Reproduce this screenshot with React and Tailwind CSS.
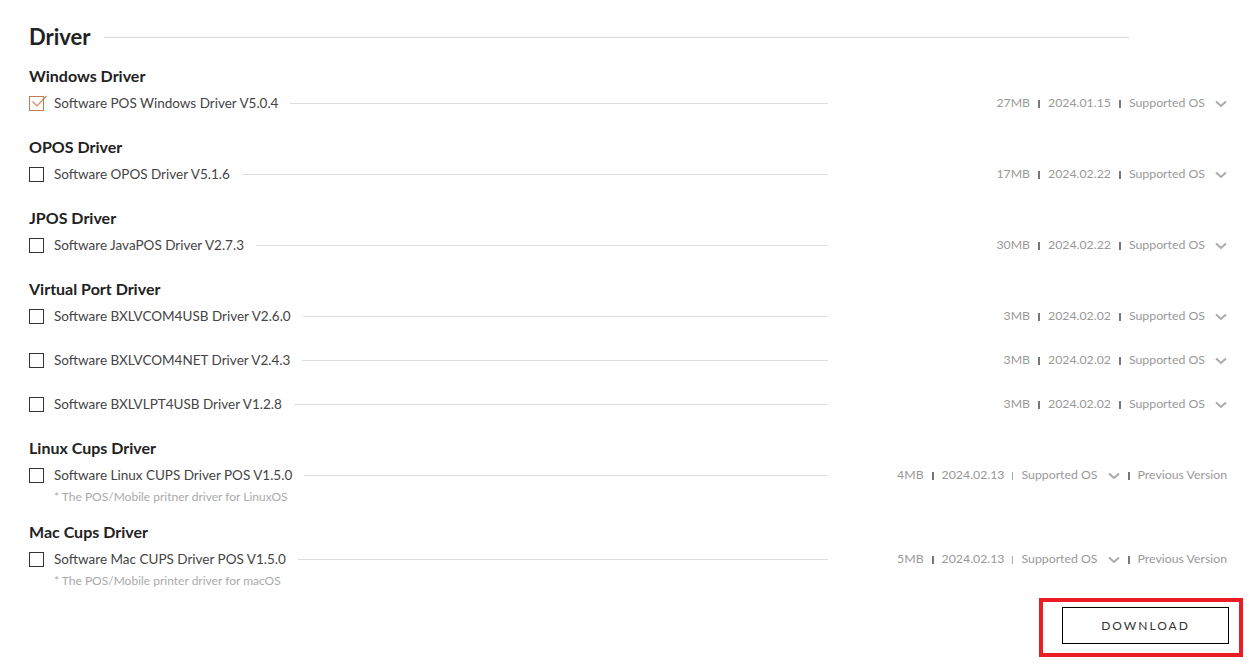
import React from 'react';

const groups = [
  {
    title: 'Windows Driver',
    items: [{ name: 'Software POS Windows Driver V5.0.4', size: '27MB', date: '2024.01.15', checked: true }],
  },
  {
    title: 'OPOS Driver',
    items: [{ name: 'Software OPOS Driver V5.1.6', size: '17MB', date: '2024.02.22' }],
  },
  {
    title: 'JPOS Driver',
    items: [{ name: 'Software JavaPOS Driver V2.7.3', size: '30MB', date: '2024.02.22' }],
  },
  {
    title: 'Virtual Port Driver',
    items: [
      { name: 'Software BXLVCOM4USB Driver V2.6.0', size: '3MB', date: '2024.02.02' },
      { name: 'Software BXLVCOM4NET Driver V2.4.3', size: '3MB', date: '2024.02.02' },
      { name: 'Software BXLVLPT4USB Driver V1.2.8', size: '3MB', date: '2024.02.02' },
    ],
  },
  {
    title: 'Linux Cups Driver',
    items: [
      {
        name: 'Software Linux CUPS Driver POS V1.5.0',
        size: '4MB',
        date: '2024.02.13',
        prev: true,
        note: '* The POS/Mobile pritner driver for LinuxOS',
      },
    ],
  },
  {
    title: 'Mac Cups Driver',
    items: [
      {
        name: 'Software Mac CUPS Driver POS V1.5.0',
        size: '5MB',
        date: '2024.02.13',
        prev: true,
        note: '* The POS/Mobile printer driver for macOS',
      },
    ],
  },
];

const Sep = ({ thin }) => (
  <span className={thin ? 'mx-[8px] inline-block w-px h-[8px] bg-[#aaa]' : 'mx-[8px] inline-block w-[2px] h-[8px] bg-[#777]'} />
);

const Chevron = () => (
  <svg width="12" height="8" viewBox="0 0 12 8" className="ml-[10px]" fill="none">
    <path d="M1 1.5l5 4.5 5-4.5" stroke="#aaa" strokeWidth="2" />
  </svg>
);

const Checkbox = ({ checked }) =>
  checked ? (
    <span className="relative inline-block w-[15px] h-[15px] border border-[#c8794c] shrink-0">
      <svg width="16" height="14" viewBox="0 0 16 14" className="absolute left-[2px] top-[-2px]" fill="none">
        <path d="M0.5 6.5l4.5 4.5 9.5-10" stroke="#d08a5e" strokeWidth="1.2" />
      </svg>
    </span>
  ) : (
    <span className="inline-block w-[15px] h-[15px] border border-[#333] shrink-0" />
  );

const Row = ({ item }) => (
  <div>
    <div className="flex items-center h-[24px]">
      <div className="flex items-center w-[799px]">
        <Checkbox checked={item.checked} />
        <span className="ml-[10px] text-[13.5px] text-[#444] whitespace-nowrap">{item.name}</span>
        <span className="ml-[12px] flex-1 h-px bg-[#ddd]" />
      </div>
      <div className="ml-auto mt-[1px] flex items-center text-[12.3px] text-[#999] whitespace-nowrap">
        <span>{item.size}</span>
        <Sep />
        <span>{item.date}</span>
        <Sep thin={item.prev} />
        <span>Supported OS</span>
        <Chevron />
        {item.prev && (
          <>
            <Sep />
            <span>Previous Version</span>
          </>
        )}
      </div>
    </div>
    {item.note && <div className="mt-[2px] pl-[25px] h-[16px] leading-[16px] text-[12px] text-[#aaa]">{item.note}</div>}
  </div>
);

export default function App() {
  return (
    <div className="w-[1251px] h-[670px] bg-white pl-[29px] pr-[24px] pt-[20px] font-['Lato',sans-serif] overflow-hidden">
      <div className="flex items-center h-[34px] mr-[98px]">
        <h2 className="text-[22px] font-bold text-[#222] leading-none">Driver</h2>
        <span className="ml-[13px] flex-1 h-px bg-[#d8d8d8]" />
      </div>

      <div className="mt-[12px]">
        {groups.map((g, i) => (
          <div key={g.title} className={i === 0 ? '' : i === 5 ? 'mt-[17px]' : 'mt-[22px]'}>
            <h3 className="h-[20px] leading-[20px] text-[16px] font-bold text-[#222]">{g.title}</h3>
            <div className="mt-[5px] flex flex-col gap-[20px]">
              {g.items.map((it) => (
                <Row key={it.name} item={it} />
              ))}
            </div>
          </div>
        ))}
      </div>

      <div className="mt-[18px] flex justify-end">
        <div className="relative mr-[-2px]">
          <button className="w-[167px] h-[37px] border border-black bg-white text-[12px] tracking-[2px] text-[#333] font-['Lato',sans-serif]">
            DOWNLOAD
          </button>
          <span className="absolute -left-[23px] -right-[14px] -top-[9px] -bottom-[13px] border-[4px] border-[#ec1c24] pointer-events-none" />
        </div>
      </div>
    </div>
  );
}
